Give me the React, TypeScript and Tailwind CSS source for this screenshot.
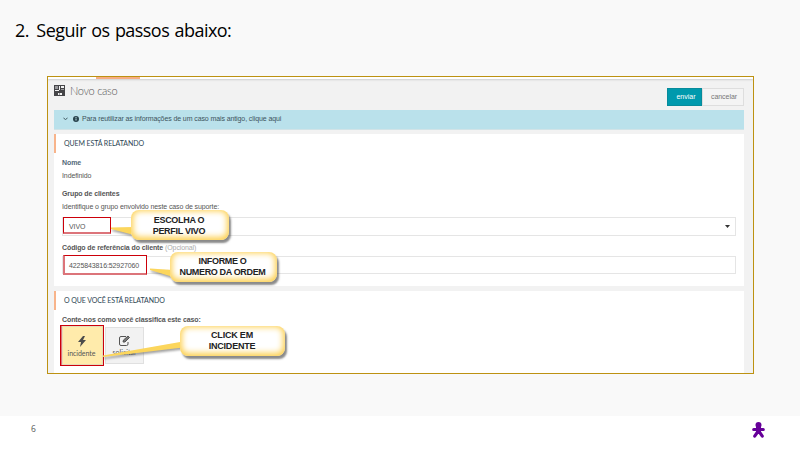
import type { ReactNode } from "react";

function Callout({ place, tail, lines }: { place: string; tail: string; lines: ReactNode }) {
  return (
    <div className={`absolute ${place}`}>
      <svg className="absolute left-0 top-0 overflow-visible drop-shadow-[1px_2px_1px_rgba(70,70,70,0.5)]" width="1" height="1">
        <path d={tail} fill="#fcd65c" />
      </svg>
      <div className="relative flex h-full w-full flex-col items-center rounded-[8px] bg-white font-['Liberation_Sans',sans-serif] text-[9px] font-bold leading-[10.5px] text-[#222] shadow-[inset_0_-1px_6px_2px_#fdcf4c,2px_3px_2px_rgba(60,60,60,0.6)]">
        {lines}
      </div>
    </div>
  );
}

function Section({ title, children, height }: { title: string; children: ReactNode; height: string }) {
  return (
    <section className={`w-[690px] bg-white ${height}`}>
      <h2 className="flex h-[19px] items-center border-l-2 border-[#f8b48b] pl-[8px] font-['Lato',sans-serif] text-[7px] tracking-[-0.1px] text-[#2d4654]">
        <span className="whitespace-nowrap">{title}</span>
      </h2>
      {children}
    </section>
  );
}

export default function App() {
  return (
    <div className="relative flex h-[450px] w-[800px] flex-col overflow-hidden bg-white font-['Liberation_Sans',sans-serif]">
      <main className="h-[416px] bg-[#f9f9f9]">
        <h1 className="h-[76px] whitespace-nowrap pl-[15px] pt-[17px] font-['Open_Sans',sans-serif] text-[18px] leading-[26px] tracking-[-0.55px] text-black [word-spacing:1.3px]">
          <span className="mr-[2px]">2.</span> Seguir os passos abaixo:
        </h1>
        <div className="ml-[47px] flex h-[298px] w-[707px] flex-col overflow-hidden border border-[#bd9212] bg-[#f2f2f2]">
          <div className="h-[2px] shrink-0 bg-white pl-[48px] shadow-[0_1px_2px_#ccc]">
            <div className="h-[2px] w-[44px] bg-[#f6ad83]" />
          </div>
          <header className="flex h-[31px] shrink-0 pl-[6px] pr-[9px]">
            <svg className="mt-[6px]" width="11" height="11" viewBox="0 0 11 11">
              <path fill="#454548" d="M0 0h11v11H0z" />
              <path fill="#f3f3f3" d="M5 1h1v4H5zM7 1h3v2H7zM1 5h4v1H1zM4 8h4v2H4z" />
              <path fill="#99999c" d="M1 1h3v3H1zM7 4h3v1H7zM5 8h1v2H5z" />
            </svg>
            <h2 className="ml-[5px] mt-[4px] whitespace-nowrap font-['Lato',sans-serif] text-[11px] font-light leading-[16px] tracking-[-0.3px] text-[#555]">Novo caso</h2>
            <div className="ml-auto mt-[9px] flex h-[18px] text-[7px] leading-[16px]">
              <button className="w-[35px] border border-[#078b9b] bg-[#0099ad] pl-[3px] text-white">enviar</button>
              <button className="w-[42px] border border-[#dedede] bg-[#f4f4f4] pl-[2px] tracking-[-0.05px] text-[#777]">cancelar</button>
            </div>
          </header>
          <div className="ml-[6px] flex h-[20px] w-[690px] shrink-0 items-center border-b border-[#d1e3e7] bg-[#bae1eb] pb-px text-[7px] tracking-[-0.1px] text-[#3c535b]">
            <svg className="ml-[9px]" width="5" height="4" viewBox="0 0 5 4"><path d="M.5 1l2 1.5 2-1.5" fill="none" stroke="#405961" /></svg>
            <svg className="ml-[5px]" width="6" height="6" viewBox="0 0 6 6"><circle cx="3" cy="3" r="3" fill="#29434d" /><path d="M3 1v1M3 2.5v2" stroke="#bde1e9" /></svg>
            <span className="ml-[3px] whitespace-nowrap">Para reutilizar as informações de um caso mais antigo, clique aqui</span>
          </div>
          <div className="ml-[6px] mt-[4px] flex flex-col gap-[5px]">
            <Section title="QUEM ESTÁ RELATANDO" height="h-[152px]">
              <div className="pl-[8px] text-[7px] leading-[9px] tracking-[-0.1px] text-[#555]">
                <p className="mt-[5px] font-bold text-[#536879]">Nome</p>
                <p className="mt-[4px]">Indefinido</p>
                <p className="mt-[9px] font-bold">Grupo de clientes</p>
                <p className="mt-[4px]">Identifique o grupo envolvido neste caso de suporte:</p>
                <div className="mt-[6px] flex h-[19px] w-[674px] items-start border border-[#e5e5e5] bg-white">
                  <div className="-mt-px h-[17px] w-[48px] border border-[#cc000a] border-b-2 border-b-[#dc747a] bg-white pl-[5px] leading-[17px]">VIVO</div>
                  <svg className="ml-auto mr-[5px] mt-[7px]" width="5" height="3" viewBox="0 0 5 3"><path d="M0 0h5L2.5 3z" fill="#333" /></svg>
                </div>
                <p className="mt-[7px] whitespace-nowrap"><b>Código de referência do cliente</b> <span className="text-[#aaa]">(Opcional)</span></p>
                <div className="mt-[4px] flex h-[18px] w-[674px] items-start border border-[#e5e5e5] bg-white">
                  <div className="-mt-[2px] h-[20px] w-[84px] border border-[#cc000a] border-b-2 border-b-[#dc747a] border-l-2 border-l-[#dc747a] bg-white pl-[4px] leading-[19px]">4225843816:52927060</div>
                </div>
              </div>
            </Section>
            <Section title="O QUE VOCÊ ESTÁ RELATANDO" height="h-[82px]">
              <p className="ml-[8px] mt-[5px] whitespace-nowrap text-[7px] font-bold leading-[9px] tracking-[-0.1px] text-[#555]">Conte-nos como você classifica este caso:</p>
              <div className="ml-[6px] mt-[1px] flex font-['Lato',sans-serif] text-[7px] text-[#555]">
                <div className="h-[41px] w-[44px] border border-[#cc000a] bg-[#dc747a] pl-px">
                  <div className="flex h-full flex-col items-center border border-[#e5dcb8] bg-[#ffebab] pr-[2px] pt-[9px]">
                    <svg width="8" height="11" viewBox="0 0 8 11"><path d="M5 0L0 6h3l-1 5 6-7H5l2-4z" fill="#4b4b4b" /></svg>
                    <span className="mt-[2px] leading-[9px] tracking-[-0.05px]">incidente</span>
                  </div>
                </div>
                <div className="ml-px mt-[2px] flex h-[37px] w-[39px] flex-col items-center border border-[#e0e0e0] bg-[#f2f2f2] pt-[7px]">
                  <svg width="11" height="11" viewBox="0 0 11 11" fill="none" stroke="#555"><path d="M7 1.5H2Q.5 1.5.5 3v6Q.5 10.500 2 10.500h5.500Q9 10.500 9 9V7" /><path d="M4 7l.5-2L9 1l1.500 1.500L6 7z" fill="#777" /></svg>
                  <span className="mt-[2px] leading-[9px]">solicitar</span>
                </div>
              </div>
            </Section>
          </div>
        </div>
      </main>
      <footer className="flex h-[34px] items-start justify-between bg-white pl-[31px] pr-[35px]">
        <span className="pt-[7px] font-['Open_Sans',sans-serif] text-[8.5px] leading-[12px] text-[#555]">6</span>
        <svg className="mt-[6px]" width="13" height="17" viewBox="0 0 13 17">
          <circle cx="6.500" cy="3" r="3" fill="#660099" />
          <path d="M1.700 7.500h9.600M6.500 7v3M6.300 9l-3.600 5.200M6.700 9l3.600 5.200" fill="none" stroke="#660099" strokeWidth="3.100" strokeLinecap="round" />
          <path d="M4 5h5v7H4z" fill="#660099" />
        </svg>
      </footer>
      <Callout place="left-[131px] top-[210px] h-[30px] w-[98px] tracking-[-0.3px]" tail="M-20 17.500L3 17v8L-20 19z" lines={<><span className="mt-[5px] -ml-[2px] whitespace-nowrap">ESCOLHA O</span><span className="-ml-[2px] whitespace-nowrap">PERFIL VIVO</span></>} />
      <Callout place="left-[170px] top-[252px] h-[30px] w-[107px] tracking-[-0.35px]" tail="M-20 16.500L3 18v7L-20 18z" lines={<><span className="mt-[4px] -ml-[2px] whitespace-nowrap">INFORME O</span><span className="-ml-[2px] whitespace-nowrap">NUMERO DA ORDEM</span></>} />
      <Callout place="left-[180px] top-[326px] h-[30px] w-[105px] tracking-[-0.2px]" tail="M-77 29.500L3 15.500v6L-77 31z" lines={<><span className="mt-[4px] -ml-px whitespace-nowrap">CLICK EM</span><span className="-ml-px whitespace-nowrap">INCIDENTE</span></>} />
    </div>
  );
}
